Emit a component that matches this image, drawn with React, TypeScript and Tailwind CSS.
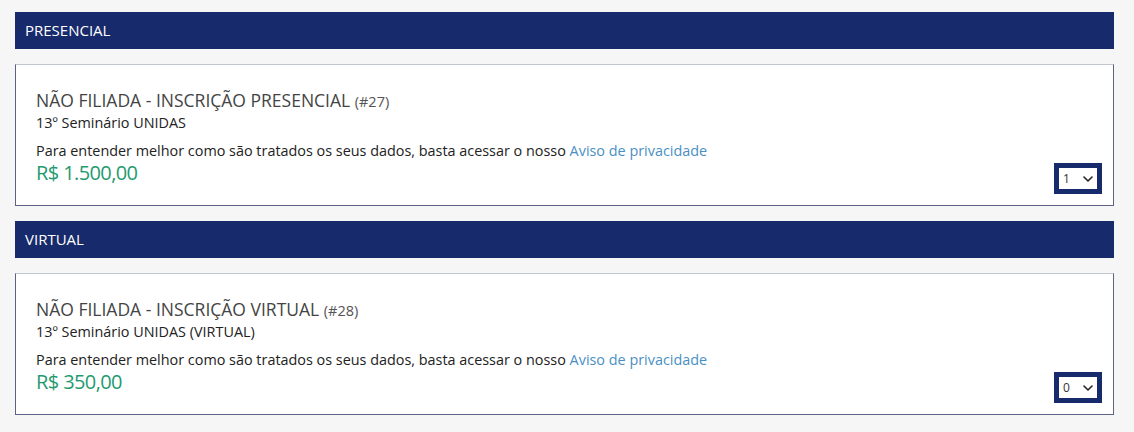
const items = [
  {
    section: "PRESENCIAL",
    title: "NÃO FILIADA - INSCRIÇÃO PRESENCIAL",
    code: "(#27)",
    event: "13º Seminário UNIDAS",
    price: "R$ 1.500,00",
    qty: "1",
  },
  {
    section: "VIRTUAL",
    title: "NÃO FILIADA - INSCRIÇÃO VIRTUAL",
    code: "(#28)",
    event: "13º Seminário UNIDAS (VIRTUAL)",
    price: "R$ 350,00",
    qty: "0",
  },
];

const App = () => {
  return (
    <div
      className="w-[1134px] h-[432px] bg-[#f6f6f7] pl-[15px] pr-[20px] pt-[12px] flex flex-col gap-[15px] text-[#222]"
      style={{ fontFamily: '"Open Sans", "Noto Sans", sans-serif' }}
    >
      {items.map((item) => (
        <div key={item.section} className="flex flex-col gap-[15px]">
          {/* Section header */}
          <div className="h-[37px] bg-[#172a6b] text-white text-[15px] flex items-center px-[10px]">
            {item.section}
          </div>
          {/* Card */}
          <div className="h-[142px] bg-white border border-[#5b6285] border-t-[#c3c7d1] px-[20px] pt-[24px] flex items-end">
            <div className="flex-1 self-start">
              <div className="text-[17.5px] leading-[22px] text-[#444]">
                {item.title} <span className="text-[14.5px] text-[#555]">{item.code}</span>
              </div>
              <div className="text-[14.4px] leading-[19px]">{item.event}</div>
              <div className="text-[14.4px] leading-[19px] mt-[9px]">
                Para entender melhor como são tratados os seus dados, basta acessar o nosso{" "}
                <span className="text-[#4a8fc4]">Aviso de privacidade</span>
              </div>
              <div className="text-[20px] leading-[26px] text-[#1f9a70] tracking-[-0.6px]">
                {item.price}
              </div>
            </div>
            <div className="mb-[11px] mr-[-9px] bg-[#172a6b] p-[5px]">
              <div className="w-[38px] h-[21px] bg-white flex items-center justify-between px-[4px] text-[12px] text-[#333]">
                <span>{item.qty}</span>
                <svg width="10" height="6" viewBox="0 0 10 6" fill="none">
                  <path d="M1 1l4 4 4-4" stroke="#222" strokeWidth="1.6" strokeLinecap="round" strokeLinejoin="round" />
                </svg>
              </div>
            </div>
          </div>
        </div>
      ))}
    </div>
  );
};

export default App;
